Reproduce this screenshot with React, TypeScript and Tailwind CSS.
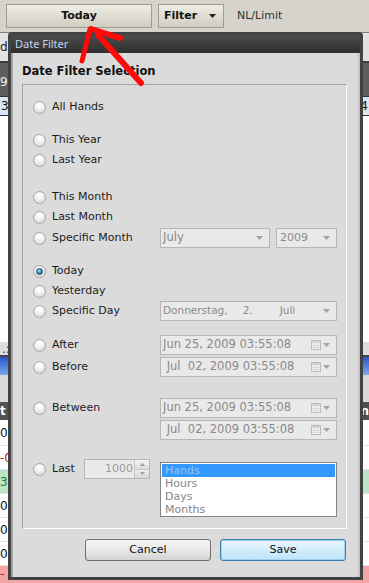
import React from "react";

function Caret({ color = "#a3a3a3" }: { color?: string }) {
  return (
    <svg width="7" height="4" viewBox="0 0 7 4" className="shrink-0">
      <path d="M0 0 H7 L3.5 4 Z" fill={color} />
    </svg>
  );
}

function Cal() {
  return (
    <svg width="10" height="10" viewBox="0 0 10 10" className="shrink-0">
      <rect x="0.5" y="0.5" width="9" height="9" fill="#f3f3f3" stroke="#bdbdbd" />
      <rect x="1" y="1" width="8" height="2" fill="#d2d2d2" />
      <path d="M1 5.5 H9 M1 7.5 H9 M3.5 3 V9 M6.5 3 V9" stroke="#dadada" strokeWidth="1" />
    </svg>
  );
}

function Radio({ checked }: { checked?: boolean }) {
  return (
    <span className="flex h-[13px] w-[13px] shrink-0 items-center justify-center rounded-full border border-[#a6a6a6] bg-[radial-gradient(circle_at_50%_30%,#ffffff_15%,#d2d2d2_100%)]">
      {checked && (
        <span className="h-[7px] w-[7px] rounded-full border border-[#1b4a66] bg-[radial-gradient(circle_at_40%_35%,#9fe4f8,#2275a0_65%)]" />
      )}
    </span>
  );
}

function Left({ label, checked, children }: { label: string; checked?: boolean; children?: React.ReactNode }) {
  return (
    <div className="flex h-[20px] w-[137px] shrink-0 items-center gap-[6px] pl-[10px]">
      <Radio checked={checked} />
      <span className="text-[11px] leading-[14px] text-[#1c1c1c]">{label}</span>
      {children}
    </div>
  );
}

function DatePick({ text }: { text: string }) {
  return (
    <div className="flex h-[20px] w-[177px] items-center border border-[#b6b6b6] bg-[#e9e9e9] pl-[2px] pr-[6px] text-[11.5px] text-[#8a8a8a]">
      <span className="whitespace-pre">{text}</span>
      <span className="ml-auto flex items-center gap-[2px]">
        <Cal />
        <Caret />
      </span>
    </div>
  );
}

function BgRow({ left, right, cls, lcls }: { left?: string; right?: string; cls: string; lcls?: string }) {
  return (
    <div className={cls}>
      <span className={lcls}>{left}</span>
      <span className={lcls}>{right}</span>
    </div>
  );
}

export default function App() {
  return (
    <div className="relative h-[583px] w-[369px] overflow-hidden bg-white font-['DejaVu_Sans',sans-serif]">
      {/* top toolbar */}
      <div className="flex h-[32px] items-center gap-[6px] bg-[#d5d3cb] pl-[6px]">
        <div className="flex h-[24px] w-[146px] items-center justify-center border border-[#9d9c8e] bg-gradient-to-b from-[#efeee6] to-[#cfcdbf] text-[11px] font-bold text-[#111]">
          Today
        </div>
        <div className="flex h-[24px] w-[66px] items-center border border-[#9d9c8e] bg-gradient-to-b from-[#efeee6] to-[#cfcdbf] pl-[5px] pr-[7px] text-[11px] font-bold text-[#111]">
          <span>Filter</span>
          <span className="ml-auto">
            <Caret color="#222" />
          </span>
        </div>
        <span className="ml-[7px] text-[11px] text-[#333]">NL/Limit</span>
      </div>

      {/* background grid peeking out */}
      <div className="flex flex-col text-[12px]">
        <div className="h-[1px] bg-[#7c7c7c]" />
        <BgRow cls="flex h-[28px] items-center justify-between bg-[#e2e2e2] pr-[2px]" left="d" right="" lcls="text-[#222]" />
        <div className="h-[2px] bg-[#3c3c3c]" />
        <BgRow cls="flex h-[33px] items-center justify-between bg-[#5e5e5e] pt-[4px]" left="9" right="" lcls="text-[#f0f0f0]" />
        <BgRow cls="flex h-[20px] items-center justify-between border-y border-[#333] bg-[#dbe6f4] px-[1px]" left="3." right="4" lcls="text-[#111]" />
        <div className="h-[226px] bg-white" />
        <BgRow cls="flex h-[13px] items-center justify-between bg-[#dedede] pl-[2px]" left=".:" right="" lcls="text-[#333]" />
        <div className="h-[2px] bg-[#444]" />
        <div className="h-[18px] bg-gradient-to-b from-[#2a56c8] to-[#7ea6ea]" />
        <div className="h-[27px] bg-[#d9d9d9]" />
        <BgRow cls="flex h-[18px] items-center justify-between bg-[#505050] font-bold" left="t" right="n" lcls="text-white" />
        <BgRow cls="flex h-[26px] items-center justify-between border-b border-[#e4e4e4] bg-white" left="0" right="" lcls="text-[#111]" />
        <BgRow cls="flex h-[24px] items-center justify-between border-b border-[#e4e4e4] bg-white" left="-0" right="" lcls="text-[#c02020]" />
        <BgRow cls="flex h-[24px] items-center justify-between border-b border-[#e4e4e4] bg-[#bfe3c6]" left="3" right="" lcls="text-[#2a7a3a]" />
        <BgRow cls="flex h-[24px] items-center justify-between border-b border-[#e4e4e4] bg-white" left="0" right="" lcls="text-[#111]" />
        <BgRow cls="flex h-[24px] items-center justify-between border-b border-[#e4e4e4] bg-white" left="0" right="" lcls="text-[#111]" />
        <BgRow cls="flex h-[24px] items-center justify-between border-b border-[#e4e4e4] bg-white" left="0" right="" lcls="text-[#111]" />
        <BgRow cls="flex h-[17px] items-start justify-between bg-[#f4a6a6] pt-[1px] leading-[14px]" left="-" right="" lcls="text-[#a01010]" />
      </div>

      {/* dialog */}
      <div className="absolute left-[8px] top-[32px] flex h-[548px] w-[355px] flex-col rounded-t-[4px] border-[3px] border-[#424242] bg-[#424242]">
        <div className="flex h-[18px] items-center bg-gradient-to-b from-[#4c4c4c] to-[#2f2f2f] pl-[4px] font-['Noto_Sans',sans-serif] text-[11px] text-[#c6d4ee]">
          Date Filter
        </div>
        <div className="flex flex-1 flex-col border-l-2 border-r-2 border-l-[#a4a4a4] border-r-[#c4c4c4] bg-[#dbdbdb]">
          <div className="pl-[9px] pt-[11px] text-[11.5px] font-bold leading-[14px] text-[#111]">Date Filter Selection</div>
          <div className="ml-[9px] mt-[6px] flex h-[445px] w-[325px] flex-col border border-b-white border-l-[#a2a2a2] border-r-white border-t-[#a2a2a2]">
            <div className="mt-[12px] flex">
              <Left label="All Hands" />
            </div>
            <div className="mt-[13px] flex">
              <Left label="This Year" />
            </div>
            <div className="flex">
              <Left label="Last Year" />
            </div>
            <div className="mt-[17px] flex">
              <Left label="This Month" />
            </div>
            <div className="flex">
              <Left label="Last Month" />
            </div>
            <div className="mt-[1px] flex items-center">
              <Left label="Specific Month" />
              <div className="flex gap-[6px]">
                <div className="flex h-[20px] w-[110px] items-center border border-[#b6b6b6] bg-[#e9e9e9] pl-[2px] pr-[6px] text-[11.5px] text-[#8a8a8a]">
                  <span>July</span>
                  <span className="ml-auto">
                    <Caret />
                  </span>
                </div>
                <div className="flex h-[20px] w-[61px] items-center border border-[#b6b6b6] bg-[#e9e9e9] pl-[3px] pr-[6px] text-[11px] text-[#8a8a8a]">
                  <span>2009</span>
                  <span className="ml-auto">
                    <Caret />
                  </span>
                </div>
              </div>
            </div>
            <div className="mt-[13px] flex">
              <Left label="Today" checked />
            </div>
            <div className="flex">
              <Left label="Yesterday" />
            </div>
            <div className="flex items-center">
              <Left label="Specific Day" />
              <div className="flex h-[20px] w-[177px] items-center border border-[#b6b6b6] bg-[#e9e9e9] pl-[2px] pr-[6px] text-[10.5px] text-[#8a8a8a]">
                <span>Donnerstag,</span>
                <span className="ml-[15px]">2.</span>
                <span className="ml-[27px]">Juli</span>
                <span className="ml-auto">
                  <Caret />
                </span>
              </div>
            </div>
            <div className="mt-[14px] flex items-center">
              <Left label="After" />
              <DatePick text="Jun 25, 2009 03:55:08" />
            </div>
            <div className="mt-[2px] flex items-center">
              <Left label="Before" />
              <DatePick text=" Jul  02, 2009 03:55:08" />
            </div>
            <div className="mt-[21px] flex items-start">
              <Left label="Between" />
              <div className="flex flex-col gap-[2px]">
                <DatePick text="Jun 25, 2009 03:55:08" />
                <DatePick text=" Jul  02, 2009 03:55:08" />
              </div>
            </div>
            <div className="mt-[19px] flex items-start">
              <Left label="Last">
                <div className="ml-auto mr-[10px] flex h-[20px] w-[66px] shrink-0 items-stretch border border-[#b6b6b6] bg-[#e9e9e9]">
                  <span className="flex flex-1 items-center justify-end pr-[1px] text-[11px] text-[#9a9a9a]">1000</span>
                  <div className="flex w-[15px] flex-col border-l border-[#c4c4c4]">
                    <div className="flex flex-1 items-center justify-center border-b border-[#c8c8c8] bg-gradient-to-b from-[#f4f4f4] to-[#dcdcdc]">
                      <svg width="5" height="3" viewBox="0 0 5 3">
                        <path d="M0 3 H5 L2.5 0 Z" fill="#a0a0a0" />
                      </svg>
                    </div>
                    <div className="flex flex-1 items-center justify-center bg-gradient-to-b from-[#f0f0f0] to-[#d6d6d6]">
                      <svg width="5" height="3" viewBox="0 0 5 3">
                        <path d="M0 0 H5 L2.5 3 Z" fill="#a0a0a0" />
                      </svg>
                    </div>
                  </div>
                </div>
              </Left>
              <div className="mt-[3px] flex h-[55px] w-[177px] flex-col border border-[#848484] bg-white p-[1px] text-[11px] leading-[13px] text-[#858585]">
                <div className="bg-[#3399ff] pl-[3px] text-[#9cc2ee]">Hands</div>
                <div className="pl-[3px]">Hours</div>
                <div className="pl-[3px]">Days</div>
                <div className="pl-[3px]">Months</div>
              </div>
            </div>
          </div>
          <div className="mt-[10px] flex justify-end gap-[9px] pr-[12px]">
            <div className="flex h-[22px] w-[126px] items-center justify-center rounded-[3px] border border-[#707070] bg-gradient-to-b from-[#f4f4f4] via-[#e8e8e8] to-[#d3d3d3] text-[11px] text-[#111]">
              Cancel
            </div>
            <div className="flex h-[22px] w-[126px] items-center justify-center rounded-[3px] border border-[#3c7fb1] bg-gradient-to-b from-[#eaf6fd] to-[#bde4f8] text-[11px] text-[#111] shadow-[inset_0_0_0_1px_#9ad4f2]">
              Save
            </div>
          </div>
        </div>
      </div>

      {/* red hand-drawn arrow */}
      <svg className="pointer-events-none absolute left-0 top-0" width="369" height="583" viewBox="0 0 369 583">
        <g stroke="#ff0a0a" strokeLinecap="round" strokeLinejoin="round" fill="none">
          <path d="M141 83 L98 35" strokeWidth="6" />
          <path d="M90 29 L82 61" strokeWidth="5" />
          <path d="M91 29 L120 38" strokeWidth="6" />
        </g>
      </svg>
    </div>
  );
}
